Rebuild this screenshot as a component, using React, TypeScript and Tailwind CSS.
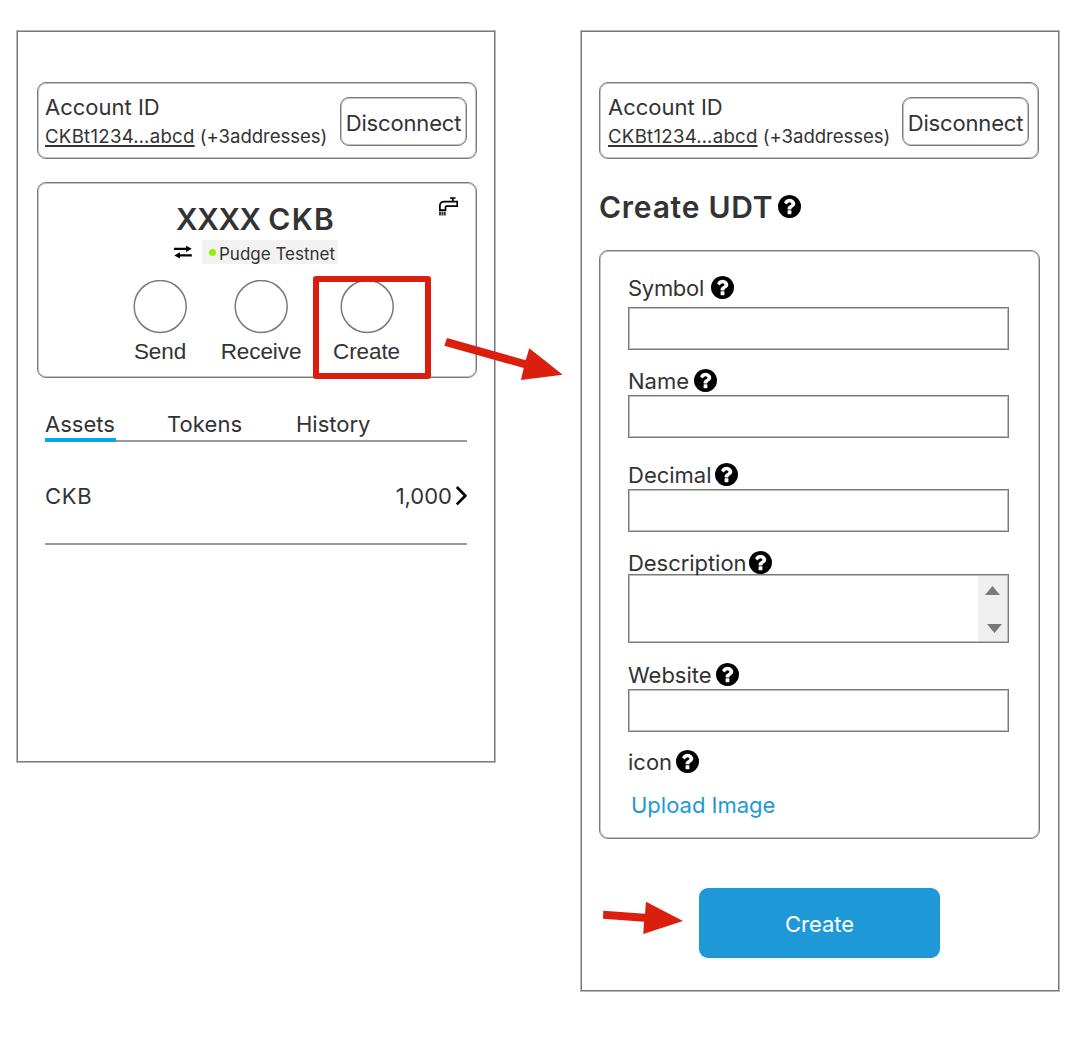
import React from "react";

function Help() {
  return (
    <svg className="-mt-[1px] h-[23px] w-[23px] shrink-0" viewBox="128 128 1536 1536" fill="#000">
      <path d="M1024 1376v-192q0-14-9-23t-23-9h-192q-14 0-23 9t-9 23v192q0 14 9 23t23 9h192q14 0 23-9t9-23zM1280 704q0-88-55.5-163t-138.5-116-170-41q-243 0-371 213-15 24 8 42l132 100q7 6 19 6 16 0 25-12 53-68 86-92 34-24 86-24 48 0 85.5 26t37.5 59q0 38-20 61t-68 45q-63 28-115.5 86.5t-52.5 125.5v36q0 14 9 23t23 9h192q14 0 23-9t9-23q0-19 21.5-49.5t54.5-49.5q32-18 49-28.5t46-35 44.5-48 28-60.5 12.5-81zM1664 896q0 209-103 385.5t-279.5 279.5-385.5 103-385.5-103-279.5-279.5-103-385.5 103-385.5 279.5-279.5 385.5-103 385.5 103 279.5 279.5 103 385.5z" />
    </svg>
  );
}

function Account({ padding }: { padding: string }) {
  return (
    <section className={`flex h-[77px] w-[440px] items-start justify-between rounded-[9px] border border-[#797979] pr-[9px] shadow-[inset_0_0_0_1px_#c4c4c4] ${padding}`}>
      <div className="pt-[10px] whitespace-nowrap">
        <div className="text-[22px] leading-[28px]">Account ID</div>
        <div className="mt-[3px] text-[18.6px] leading-[24px]">
          <span className="tracking-[0.28px] underline decoration-[1.5px] underline-offset-[2px] [text-decoration-skip-ink:none]">CKBt1234…abcd</span>
          <span className="tracking-[-0.05px]"> (+3addresses)</span>
        </div>
      </div>
      <button className="mt-[14px] flex h-[49px] w-[127px] items-center justify-center rounded-[9px] border border-[#797979] pt-[2px] text-[22px] leading-[28px] tracking-[-0.15px] shadow-[inset_0_0_0_1px_#c4c4c4]">
        Disconnect
      </button>
    </section>
  );
}

function Action({ label, className }: { label: string; className: string }) {
  return (
    <div className={`flex flex-col items-center ${className}`}>
      <svg className="h-[54px] w-[54px]" viewBox="0 0 54 54">
        <circle cx="27.2" cy="26.5" r="26" fill="#fff" stroke="#797979" strokeWidth="1.5" />
      </svg>
      <div className="mt-[4px] font-['Liberation_Sans',sans-serif] text-[22.5px] leading-[28px] tracking-[-0.1px]">{label}</div>
    </div>
  );
}

function Field({ label, labelWidth, className, inputClass }: { label: string; labelWidth: string; className: string; inputClass: string }) {
  return (
    <div className={className}>
      <label className="flex h-[28px] items-center text-[22px] leading-[28px]">
        <span className={`shrink-0 whitespace-nowrap ${labelWidth}`}>{label}</span>
        <Help />
      </label>
      {inputClass && (
        <input className={`block h-[43px] w-[381px] border border-[#797979] bg-white shadow-[inset_0_0_0_1px_#bdbdbd] outline-none ${inputClass}`} />
      )}
    </div>
  );
}

function Wallet() {
  return (
    <main className="h-[733px] w-[480px] shrink-0 border border-[#b8b8b8] pt-[51px] pl-[20px] shadow-[inset_0_0_0_1px_#797979]">
      <Account padding="pl-[7px]" />
      <section className="relative mt-[23px] h-[196px] w-[440px] rounded-[9px] border border-[#797979] shadow-[inset_0_0_0_1px_#c4c4c4]">
        <svg className="absolute top-[13px] left-[400px] h-[21px] w-[22px]" viewBox="0 0 22 21" fill="none">
          <path d="M12 2h5.6M14.8 2v3" stroke="#000" strokeWidth="1.7" />
          <path d="M19.2 5.6H6.5Q1.9 5.6 1.9 9.5v4.7h5.6V11.2q0-1 1.2-1h10.5z" stroke="#000" strokeWidth="1.7" />
          <path d="M2 15.6v4M4.4 15.6v4M6.8 15.6v4" stroke="#333" strokeWidth="1.9" />
        </svg>
        <h1 className="pt-[17px] pl-[138px] text-[30px] leading-[38px] font-semibold whitespace-nowrap">
          <span className="tracking-[-0.4px]">XXXX</span> <span className="tracking-[1.2px]">CKB</span>
        </h1>
        <div className="mt-[2px] flex items-center pl-[136px]">
          <svg className="h-[14px] w-[18px]" viewBox="0 0 18 14">
            <path d="M0 2.7h12V0.7L17.8 3.8 12 6.9V4.9H0zM17.8 9.3H6V7.3L0.2 10.4l5.8 3.1v-2h11.8z" fill="#000" />
          </svg>
          <div className="ml-[10px] flex h-[24px] w-[136px] items-center bg-[#f2f2f2] pl-[7px] text-[17px] leading-[24px] whitespace-nowrap">
            <span className="mr-[3px] h-[7px] w-[7px] shrink-0 rounded-full bg-[#95f204]" />
            <span className="pt-[3px]">Pudge Testnet</span>
          </div>
        </div>
        <div className="mt-[16px] flex">
          <Action label="Send" className="ml-[82px] w-[80px]" />
          <Action label="Receive" className="ml-[16px] w-[90px]" />
          <div className="relative ml-[20px]">
            <Action label="Create" className="w-[81px]" />
            <div className="absolute -top-[4px] -left-[13px] h-[103px] w-[118px] rounded-[3px] border-6 border-[#db1f0e]" />
          </div>
        </div>
      </section>
      <nav className="mt-[32px] ml-[8px] flex h-[32px] w-[422px] border-b-2 border-[#999] text-[22px] leading-[28px]">
        <span className="relative w-[122px]">
          Assets
          <i className="absolute -bottom-[2px] left-0 h-[4px] w-[71px] bg-[#02a7f0]" />
        </span>
        <span className="w-[129px] tracking-[0.1px]">Tokens</span>
        <span>History</span>
      </nav>
      <div className="ml-[8px] flex h-[103px] w-[422px] items-start border-b-2 border-[#999] pt-[40px] text-[22px] leading-[28px]">
        <span className="tracking-[0.7px]">CKB</span>
        <span className="ml-auto">1,000</span>
        <svg className="mt-[4px] ml-[3px] h-[20px] w-[12px]" viewBox="0 0 12 20">
          <path d="M1.8 1 10.3 9.7l-8.5 8.7" fill="none" stroke="#000" strokeWidth="2.7" />
        </svg>
      </div>
    </main>
  );
}

function CreateToken() {
  return (
    <main className="h-[962px] w-[480px] shrink-0 border border-[#b8b8b8] pt-[51px] pl-[18px] shadow-[inset_0_0_0_1px_#797979]">
      <Account padding="pl-[8px]" />
      <h2 className="mt-[29px] flex h-[38px] items-center text-[30px] leading-[38px] font-semibold tracking-[0.75px]">
        <span className="w-[179px] shrink-0 whitespace-nowrap">Create UDT</span>
        <Help />
      </h2>
      <form className="mt-[24px] h-[589px] w-[441px] rounded-[9px] border border-[#797979] pl-[28px] shadow-[inset_0_0_0_1px_#c4c4c4]">
        <Field label="Symbol" labelWidth="w-[83px] tracking-[-0.3px]" className="mt-[23px]" inputClass="mt-[5px]" />
        <Field label="Name" labelWidth="w-[66px]" className="mt-[17px]" inputClass="mt-0" />
        <Field label="Decimal" labelWidth="w-[87px]" className="mt-[23px]" inputClass="mt-0" />
        <Field label="Description" labelWidth="w-[121px] tracking-[-0.05px]" className="mt-[17px]" inputClass="" />
        <div className="-mt-[3px] flex h-[69px] w-[381px] justify-end border border-[#797979] shadow-[inset_0_0_0_1px_#bdbdbd]">
          <div className="m-[1px] flex w-[29px] flex-col items-center justify-between bg-[#efefef] pt-[10px] pb-[8px]">
            <svg className="h-[9px] w-[15px]" viewBox="0 0 15 9"><path d="M0 9 7.5 0 15 9z" fill="#797979" /></svg>
            <svg className="ml-[3px] h-[9px] w-[15px]" viewBox="0 0 15 9"><path d="M0 0h15L7.5 9z" fill="#797979" /></svg>
          </div>
        </div>
        <Field label="Website" labelWidth="w-[88px]" className="mt-[18px]" inputClass="mt-0" />
        <Field label="icon" labelWidth="w-[48px]" className="mt-[16px]" inputClass="" />
        <a className="mt-[15px] ml-[3px] block text-[22px] leading-[28px] text-[#1e98d7]">Upload Image</a>
      </form>
      <button className="mt-[49px] ml-[100px] flex h-[70px] w-[241px] items-center justify-center rounded-[9px] bg-[#1e98d7] pt-[2px] text-[22px] leading-[28px] text-white">
        Create
      </button>
    </main>
  );
}

export default function App() {
  return (
    <div className="relative flex h-[1038px] w-[1092px] items-start gap-[84px] overflow-hidden bg-white pt-[30px] pl-[16px] font-[Inter,sans-serif] text-[#333]">
      <Wallet />
      <CreateToken />
      <svg className="absolute top-[330px] left-[440px] h-[60px] w-[130px]" viewBox="440 330 130 60">
        <path d="M447 338 525.7 360.3 529.3 348.3 562.7 374.7 521 380 523.7 368 444.3 345.7z" fill="#db1f0e" />
      </svg>
      <svg className="absolute top-[895px] left-[600px] h-[45px] w-[90px]" viewBox="600 895 90 45">
        <path d="M603.3 910.7 645 913.7 646 901.7 683 921 643.3 934 644 921.7 603 918.7z" fill="#db1f0e" />
      </svg>
    </div>
  );
}
